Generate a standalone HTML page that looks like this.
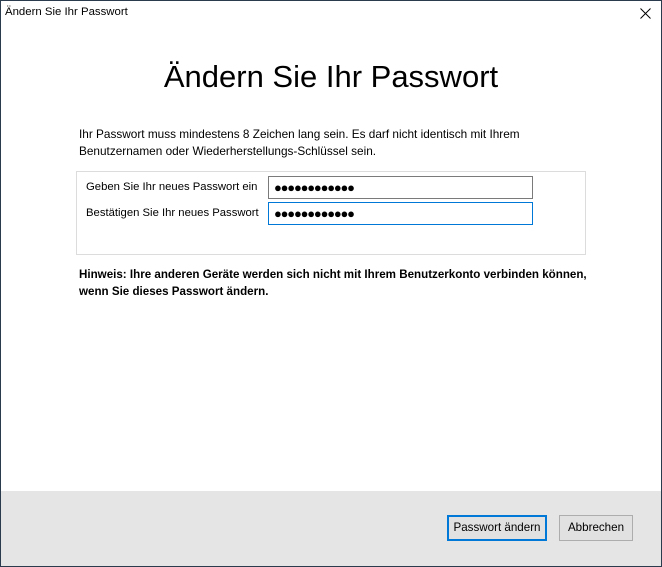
<!DOCTYPE html>
<html><head><style>
*{margin:0;padding:0;box-sizing:border-box}
body{width:662px;height:567px;overflow:hidden;background:#fff;font-family:"Liberation Sans",sans-serif;font-size:12px;color:#000;position:relative}
.win{position:absolute;left:0;top:0;width:662px;height:567px;border:1px solid #2b3b4e}
.a{position:absolute;white-space:nowrap}
.lbl{font-size:11.3px}
.inp{position:absolute;left:268px;width:265px;height:23px;border:1px solid #7a7a7a;font-size:13px;letter-spacing:-1.2px;padding:1px 0 0 5px;line-height:19px}
.footer{position:absolute;left:1px;top:491px;width:660px;height:75px;background:#e5e5e5}
.btn{position:absolute;top:515px;height:26px;border:1px solid #adadad;background:#e1e1e1;text-align:center;line-height:24px;font-size:11.6px}
</style></head><body>
<div class="win"></div>
<div class="a" style="left:5px;top:6px;font-size:11.4px">Ändern Sie Ihr Passwort</div>
<svg class="a" style="left:640px;top:8px" width="11" height="11"><path d="M0.5 0.5L10.5 10.5M10.5 0.5L0.5 10.5" stroke="#000" stroke-width="1"/></svg>
<div class="a" style="left:0;width:662px;text-align:center;top:59px;font-size:31px">Ändern Sie Ihr Passwort</div>
<div class="a" style="left:79px;top:126px;line-height:17px;font-size:11.8px">Ihr Passwort muss mindestens 8 Zeichen lang sein. Es darf nicht identisch mit Ihrem<br>Benutzernamen oder Wiederherstellungs-Schlüssel sein.</div>
<div class="a" style="left:76px;top:171px;width:510px;height:84px;border:1px solid #dcdcdc"></div>
<div class="a lbl" style="left:86px;top:181px">Geben Sie Ihr neues Passwort ein</div>
<div class="a lbl" style="left:86px;top:207px">Bestätigen Sie Ihr neues Passwort</div>
<div class="inp" style="top:176px">●●●●●●●●●●●●</div>
<div class="inp" style="top:202px;border-color:#0078d7">●●●●●●●●●●●●</div>
<div class="a" style="left:79px;top:266px;line-height:17px;font-weight:bold;font-size:11.6px">Hinweis: Ihre anderen Geräte werden sich nicht mit Ihrem Benutzerkonto verbinden können,<br>wenn Sie dieses Passwort ändern.</div>
<div class="footer"></div>
<div class="btn" style="left:447px;width:100px;border:2px solid #0078d7;line-height:22px">Passwort ändern</div>
<div class="btn" style="left:559px;width:74px">Abbrechen</div>
</body></html>
